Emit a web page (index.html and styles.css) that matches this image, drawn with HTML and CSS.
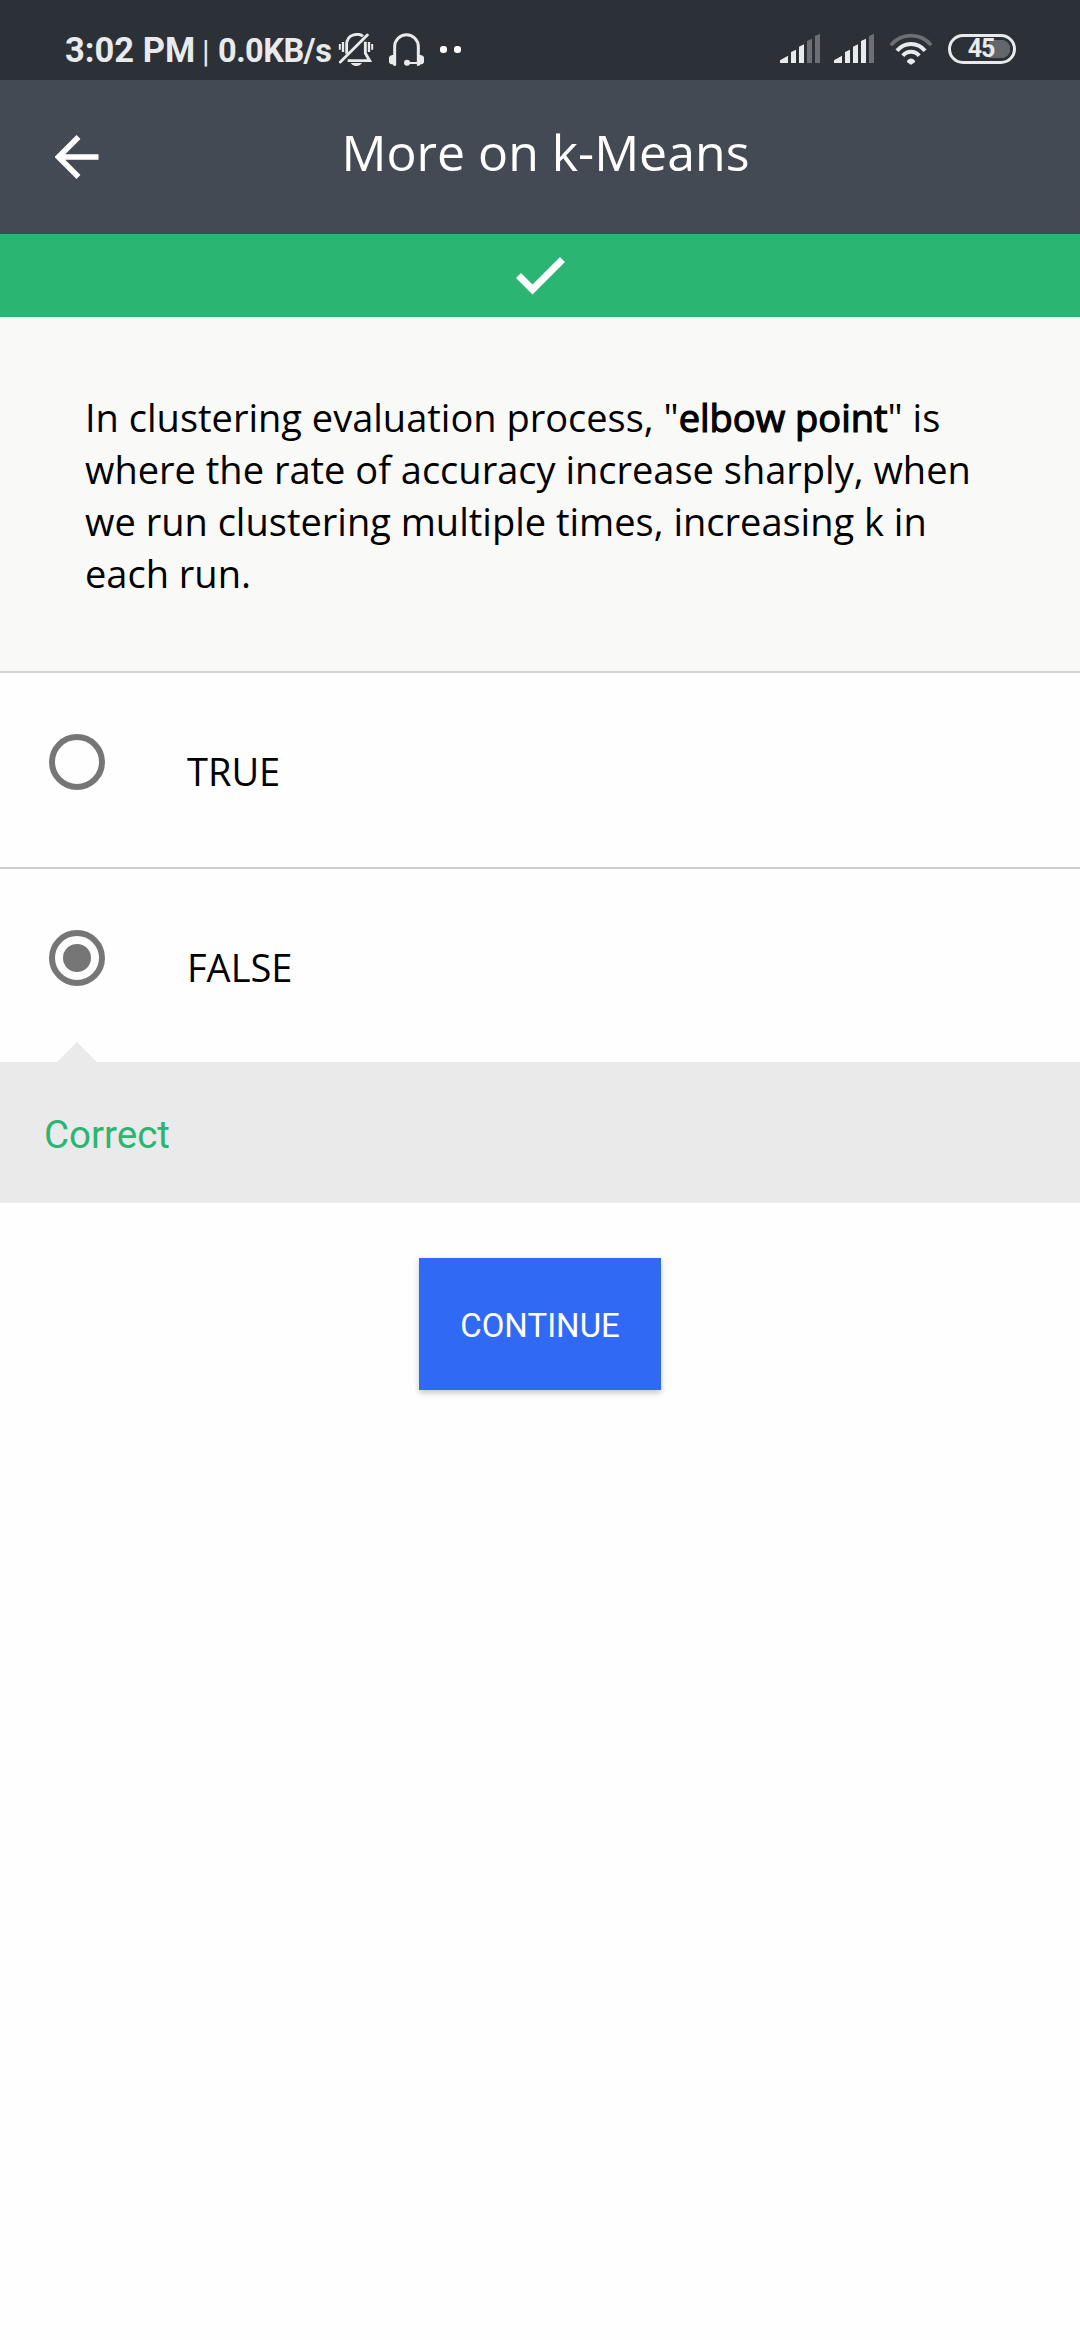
FILE: index.html
```html
<!DOCTYPE html>
<html lang="en">
<head>
<meta charset="utf-8">
<title>More on k-Means</title>
<link rel="stylesheet" href="styles.css">
</head>
<body>
<div class="status">
  <span class="time">3:02 PM</span>
  <span class="divider">|</span>
  <span class="speed">0.0KB/s</span>
  <svg class="bell" width="36" height="34" viewBox="54 69 108 102" fill="none" stroke="#e9eaeb">
    <path stroke-width="6" d="M59.500 102v17M156.500 102v17"/>
    <path stroke-width="7" d="M69 96v30M147 96v30"/>
    <path stroke-width="8.500" d="M80 131V104C80 68 120 70 129 79"/>
    <path stroke-width="8.500" d="M136 95V130L149 152H83"/>
    <path stroke-width="8.500" stroke-linecap="round" d="M61 156L142 75"/>
    <path fill="#e9eaeb" stroke="none" d="M92 159h34q-6 9-17 9t-17-9z"/>
  </svg>
  <svg class="headset" width="37" height="34" viewBox="204 69 111 102" fill="none" stroke="#e9eaeb">
    <path stroke-width="9" d="M224 166V110a35.500 35.500 0 0 1 71 0V166"/>
    <path fill="#e9eaeb" stroke="none" d="M228 135h-11q-10 2-10 9v11q0 7 10 8l5 4h6zM291 135h11q10 2 10 9v11q0 7-10 8l-5 4h-6z"/>
    <path stroke-width="6" d="M262 159h31"/>
    <circle cx="261" cy="158.500" r="9" fill="#e9eaeb" stroke="none"/>
  </svg>
  <span class="dots"><i></i><i></i></span>
  <span class="spacer"></span>
  <svg class="signal" width="42" height="31" viewBox="57 69 126 93" fill="#e9eaeb">
    <path d="M60 159v-8l24-14v22zM93 159v-33l15-7v40zM117 159v-49l15-7v56z"/>
    <path fill="#6c6f74" d="M141 159V93l15-7v73zM165 159V78l15-7v88z"/>
  </svg>
  <svg class="signal" width="42" height="31" viewBox="57 69 126 93" fill="#e9eaeb">
    <path d="M60 159v-8l24-14v22zM93 159v-33l15-7v40zM117 159v-49l15-7v56zM141 159V93l15-7v73z"/>
    <path fill="#6c6f74" d="M165 159V78l15-7v88z"/>
  </svg>
  <svg class="wifi" width="44" height="33" viewBox="387 69 132 99" fill="none" stroke="#e9eaeb" stroke-width="12">
    <path stroke="#6c6f74" stroke-width="11" d="M392.600 105.500A78 78 0 0 1 513.400 105.500"/>
    <path d="M411 122.500A53 53 0 0 1 495 122.500"/>
    <path d="M428.500 137.500A31 31 0 0 1 477.500 137.500"/>
    <path fill="#e9eaeb" stroke="none" d="M441 152q12-13 24 0q1 3-1 5l-8 6q-3 2-6 0l-8-6q-2-2-1-5z"/>
  </svg>
  <span class="battery"><b>45</b></span>
</div>
<header class="header">
  <svg class="back" width="44" height="44" viewBox="0 0 44 44" fill="none" stroke="#fff" stroke-width="5.600">
    <path d="M43.500 22H5M23.500 2L3.500 22L23.500 42"/>
  </svg>
  <h1 class="title">More on k-Means</h1>
</header>
<div class="banner">
  <svg width="49" height="38" viewBox="0 0 49 38" fill="none" stroke="#fff" stroke-width="7">
    <path d="M2.500 18.500L16.500 32.500L46.500 2.500"/>
  </svg>
</div>
<main>
  <p class="question">In clustering evaluation process, "<span class="strong">elbow point</span>" is<br>where the rate of accuracy increase sharply, when<br>we run clustering multiple times, increasing k in<br>each run.</p>
  <div class="option">
    <span class="radio"></span>
    <span class="label">TRUE</span>
  </div>
  <div class="option selected">
    <span class="radio"></span>
    <span class="label">FALSE</span>
  </div>
  <div class="feedback">Correct</div>
  <button class="continue">CONTINUE</button>
</main>
</body>
</html>
```
FILE: styles.css
```css
* { box-sizing: border-box; }

body {
  margin: 0;
  min-height: 2340px;
  background: #fefefe;
  color: #000;
  font-family: "Open Sans", "Noto Sans", sans-serif;
}

svg { display: block; flex: none; }

.status {
  display: flex;
  align-items: flex-start;
  height: 80px;
  padding: 33px 64px 0 65px;
  background: #2c3037;
  color: #e9eaeb;
  font-family: Roboto, sans-serif;
  white-space: nowrap;
}
.time {
  width: 137px;
  font-size: 34.5px;
  font-weight: 700;
  line-height: 35px;
}
.divider { width: 16px; font-size: 31px; line-height: 37px; }
.speed {
  width: 120px;
  font-size: 32.5px;
  font-weight: 700;
  line-height: 36px;
  letter-spacing: -0.5px;
}
.headset { margin-left: 14px; }
.dots { display: flex; gap: 7px; margin: 13px 0 0 15px; }
.dots i { width: 7px; height: 7px; border-radius: 3px; background: #fff; }
.spacer { flex: 1; }
.signal { margin-right: 12px; }
.wifi { margin: 0 15px 0 2px; }
.battery {
  display: flex;
  align-items: center;
  justify-content: center;
  width: 68px;
  height: 30px;
  margin-top: 1px;
  border: 3px solid #e9eaeb;
  border-radius: 15px;
  background: radial-gradient(circle at 50px 12px, #63666a 9px, transparent 9.500px), linear-gradient(#63666a, #63666a) 38px 3px / 12px 18px no-repeat;
}
.battery b { margin-right: 2px; font-size: 25px; line-height: 24px; letter-spacing: -1px; }

.header {
  display: grid;
  grid-template-columns: 54px 1fr 54px;
  align-items: start;
  height: 154px;
  padding: 54px 55px 0 55px;
  background: #444a54;
}
.back { margin-top: 1px; }
.title {
  margin: -16px 0 0 11px;
  color: #fff;
  font-size: 50px;
  font-weight: 400;
  line-height: 69px;
  text-align: center;
}

.banner {
  display: flex;
  align-items: flex-start;
  justify-content: center;
  height: 83px;
  padding-top: 23px;
  background: #2bb573;
}

.question {
  height: 356px;
  margin: 0;
  padding: 74px 85px 0;
  border-bottom: 2px solid #d4d4d4;
  background: #f9f9f7;
  font-size: 38px;
  line-height: 52px;
  white-space: nowrap;
}
.strong { -webkit-text-stroke: 1.2px #000; }

.option {
  display: flex;
  align-items: flex-start;
  height: 196px;
  padding: 61px 0 0 49px;
  border-bottom: 2px solid #ccc;
}
.option.selected { height: 193px; border-bottom: 0; }
.radio {
  display: grid;
  place-items: center;
  width: 56px;
  height: 56px;
  border: 6px solid #767676;
  border-radius: 50%;
}
.selected .radio::after {
  content: "";
  width: 28px;
  height: 28px;
  border-radius: 50%;
  background: #767676;
}
.label {
  margin: 11px 0 0 82px;
  font-size: 38px;
  line-height: 52px;
}

.feedback {
  position: relative;
  height: 141px;
  padding: 48px 0 0 44px;
  background: #eaeaea;
  color: #2bb573;
  font-family: Roboto, sans-serif;
  font-size: 38.5px;
  line-height: 50px;
}
.feedback::before {
  content: "";
  position: absolute;
  left: 57px;
  top: -20px;
  border: solid transparent;
  border-width: 0 20px 20px;
  border-bottom-color: #eaeaea;
}

.continue {
  display: block;
  width: 242px;
  height: 132px;
  margin: 55px auto 0;
  padding: 3px 0 0;
  border: 0;
  background: #3069f3;
  box-shadow: 0 3px 6px rgba(0, 0, 0, 0.22);
  color: #fff;
  font-family: Roboto, sans-serif;
  font-size: 33px;
}
```
